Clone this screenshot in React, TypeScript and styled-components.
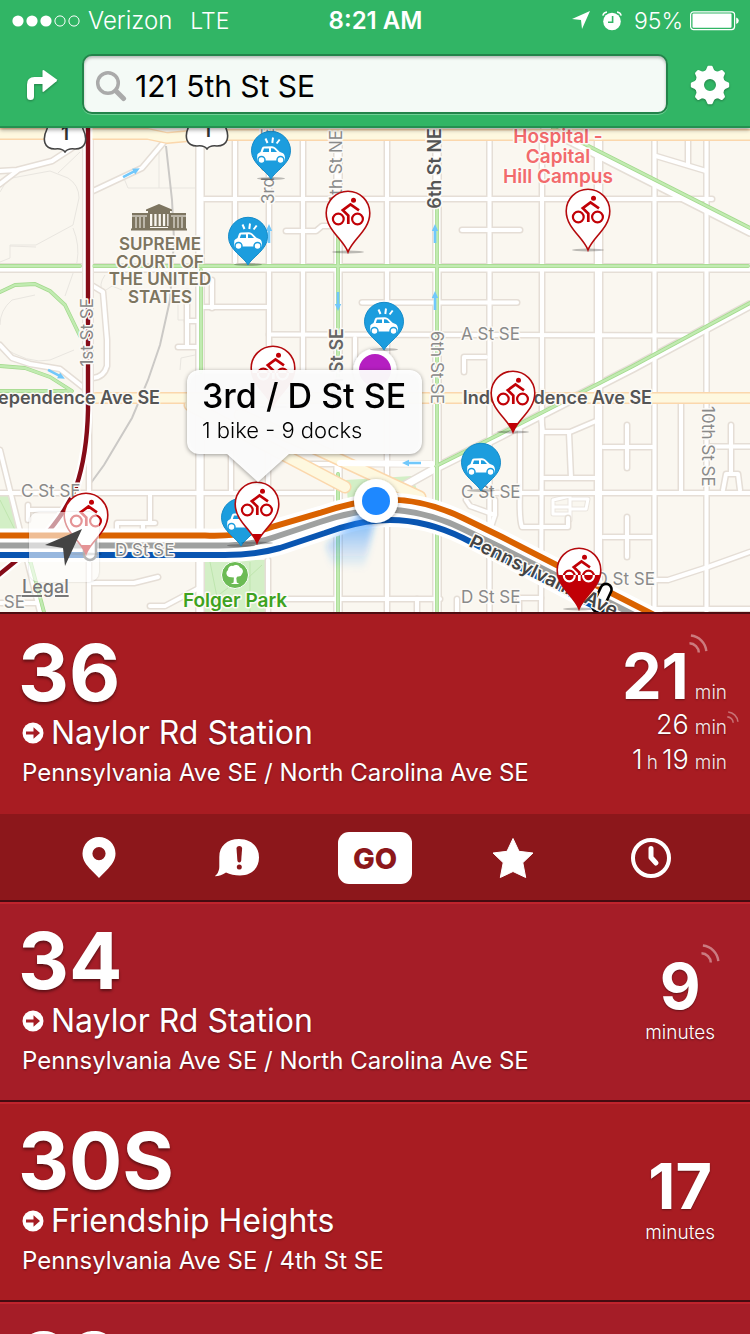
import React, { useId } from "react";
import styled, { createGlobalStyle } from "styled-components";

const GlobalStyle = createGlobalStyle`
  *, *::before, *::after { box-sizing: border-box; }
  body { margin: 0; background: #a81c22; }
  button { border: 0; padding: 0; margin: 0; background: none; color: inherit; font: inherit; cursor: pointer; }
  svg { display: block; }
`;

const FONT = `Inter, "Liberation Sans", sans-serif`;

const Page = styled.div`
  height: 100vh;
  display: flex;
  flex-direction: column;
  overflow: hidden;
  font-family: ${FONT};
  color: #fff;
`;

/* ---------- Header ---------- */

const Header = styled.header`
  flex: none;
  position: relative;
  z-index: 2;
  background: #31b565;
  border-bottom: 2px solid #259050;
  box-shadow: 0 2px 4px rgba(0, 0, 0, 0.35);
`;

const StatusBar = styled.div`
  height: 42px;
  padding: 0 11px 0 12px;
  display: grid;
  grid-template-columns: 1fr auto 1fr;
  align-items: center;
  font-size: 23px;
  font-weight: 300;
  line-height: 40px;
`;

const StatusGroup = styled.div<{ $end?: boolean }>`
  display: flex;
  align-items: center;
  gap: ${(p) => (p.$end ? 7 : 8)}px;
  justify-content: ${(p) => (p.$end ? "flex-end" : "flex-start")};
`;

const StatusIcons = styled.span`
  display: flex;
  gap: 12px;
  margin-right: 5px;
`;

const Carrier = styled.span`
  font-size: 24px;
`;

const Network = styled.span`
  margin-left: 10px;
`;

const Clock = styled.span`
  font-size: 24px;
  font-weight: 600;
`;

const SearchRow = styled.div`
  display: flex;
  align-items: center;
  padding: 12px 0;
`;

const HeaderButton = styled.button`
  width: 82px;
  height: 60px;
  padding: 2px 0 0 2px;
  display: flex;
  align-items: center;
  justify-content: center;
  svg { filter: drop-shadow(0 1px 1px rgba(0, 0, 0, 0.3)); }
`;

const SearchBox = styled.label`
  flex: 1;
  height: 60px;
  display: flex;
  align-items: center;
  gap: 8px;
  padding: 4px 12px 0 11px;
  border: 2px solid #23834a;
  border-radius: 10px;
  background: #f4faf6;
  box-shadow: inset 0 2px 3px rgba(0, 0, 0, 0.25), 0 1px 0 #6fcf95;
`;

const SearchInput = styled.input`
  flex: 1;
  min-width: 0;
  border: 0;
  padding: 0;
  outline: 0;
  background: none;
  color: #000;
  font: 400 30px/40px ${FONT};
`;

/* ---------- Map ---------- */

const MapArea = styled.section`
  flex: none;
  position: relative;
  width: 100%;
  aspect-ratio: 750 / 484;
  overflow: hidden;
  background: #faf7f0;
`;

const MapDrawing = styled.svg`
  width: 100%;
  height: 100%;
  font-family: ${FONT};
`;

const MapPin = styled.button<{ $x: number; $y: number }>`
  position: absolute;
  left: ${(p) => (p.$x / 750) * 100}%;
  top: ${(p) => (p.$y / 484) * 100}%;
  transform: translate(-50%, -100%);
  svg { overflow: visible; }
`;

const Callout = styled.div<{ $x: number; $y: number }>`
  position: absolute;
  left: ${(p) => (p.$x / 750) * 100}%;
  top: ${(p) => (p.$y / 484) * 100}%;
  width: 235px;
  height: 84px;
  padding: 8px 15px;
  border-radius: 12px;
  background: rgba(255, 255, 255, 0.95);
  color: #000;
  filter: drop-shadow(0 1px 2px rgba(0, 0, 0, 0.4));
  &::after {
    content: "";
    position: absolute;
    left: 40px;
    top: 100%;
    border: solid transparent;
    border-width: 28px 31px 0;
    border-top-color: rgba(255, 255, 255, 0.95);
  }
`;

const CalloutTitle = styled.h2`
  margin: 0;
  font-size: 34px;
  font-weight: 500;
  line-height: 36px;
  white-space: nowrap;
`;

const CalloutText = styled.p`
  margin: 0;
  font-size: 22px;
  font-weight: 300;
  line-height: 32px;
  white-space: nowrap;
`;

const MapTools = styled.div`
  position: absolute;
  left: 22px;
  bottom: 14px;
`;

const LocateButton = styled.button`
  display: block;
  width: 70px;
  height: 70px;
  margin-left: 7px;
  border-radius: 10px;
  background: rgba(255, 255, 255, 0.58);
  box-shadow: 0 0 2px rgba(0, 0, 0, 0.2);
`;

const LegalLink = styled.a`
  display: block;
  margin-top: -6px;
  color: #777;
  font-size: 18px;
  font-weight: 500;
  line-height: 22px;
  text-decoration: underline;
  text-decoration-thickness: 2px;
  text-underline-offset: 2px;
  text-shadow: 0 0 2px #fff, 0 0 2px #fff;
`;

/* ---------- Routes ---------- */

const Routes = styled.main`
  flex: 1;
  min-height: 0;
  overflow-y: auto;
  scrollbar-width: none;
  border-top: 2px solid #4e0d11;
`;

const RouteCard = styled.article<{ $alt?: boolean; $first?: boolean }>`
  background: ${(p) => (p.$alt ? "#a51d27" : "#a81c22")};
  border-top: ${(p) => (p.$first ? 0 : 2)}px solid #bf242d;
  border-bottom: 2px solid #440b10;
`;

const RouteBody = styled.div<{ $first?: boolean }>`
  height: ${(p) => (p.$first ? 200 : 196)}px;
  padding: ${(p) => (p.$first ? 28 : 26)}px 0 0 18px;
  display: flex;
  justify-content: space-between;
  text-shadow: 0 1px 2px rgba(0, 0, 0, 0.4);
`;

const RouteNumber = styled.h3`
  margin: 0 0 11px;
  font-size: 79px;
  font-weight: 700;
  line-height: 60px;
  text-shadow: 0 2px 3px rgba(0, 0, 0, 0.45);
`;

const Headsign = styled.div`
  display: flex;
  align-items: center;
  gap: 7px;
  padding-left: 4px;
  font-size: 32px;
  line-height: 40px;
`;

const Stop = styled.div`
  margin-top: 4px;
  padding-left: 4px;
  font-size: 24px;
  line-height: 32px;
`;

const Single = styled.div`
  margin-right: 35px;
  padding-top: 28px;
  text-align: center;
`;

const BigTime = styled.div`
  position: relative;
  width: max-content;
  margin: 0 auto;
  font-size: 63px;
  font-weight: 700;
  line-height: 56px;
`;

const Minutes = styled.div`
  margin-top: 5px;
  font-size: 19px;
  font-weight: 300;
  line-height: 28px;
`;

const TimeTable = styled.div`
  display: grid;
  grid-template-columns: auto auto;
  column-gap: 6px;
  align-content: start;
  align-items: baseline;
  justify-items: end;
  margin-right: 23px;
  padding-top: 6px;
  font-size: 27px;
  font-weight: 300;
  line-height: 32px;
`;

const HourTime = styled.span`
  display: flex;
  align-items: baseline;
  gap: 4px;
`;

const Unit = styled.span`
  position: relative;
  font-size: 19px;
  font-weight: 300;
  opacity: 0.9;
`;

const Signal = styled.span<{ $small?: boolean }>`
  position: absolute;
  left: 100%;
  top: ${(p) => (p.$small ? -1 : -14)}px;
`;

const Actions = styled.nav`
  height: 86px;
  padding: 2px 30px 0 30px;
  display: grid;
  grid-template-columns: repeat(5, 1fr);
  place-items: center;
  background: #8c171b;
`;

const ActionButton = styled.button`
  display: grid;
  place-items: center;
  width: 74px;
  height: 52px;
`;

const GoButton = styled(ActionButton)`
  border-radius: 11px;
  background: #fff;
  color: #8c171b;
  font-size: 29px;
  font-weight: 800;
`;

/* ---------- Icons ---------- */

const SignalDots = () => (
  <svg width="68" height="14" viewBox="0 0 68 14">
    {[6, 20, 34].map((x) => <circle key={x} cx={x} cy="7" r="5.6" fill="#fff" />)}
    {[48, 62].map((x) => <circle key={x} cx={x} cy="7" r="5.1" fill="none" stroke="#fff" />)}
  </svg>
);

const LocationArrow = () => (
  <svg width="18" height="18" viewBox="0 0 18 18"><path d="M18 0 10 18 9 9 0 8Z" fill="#fff" /></svg>
);

const AlarmIcon = () => (
  <svg width="20" height="20" viewBox="0 0 20 20">
    <circle cx="10" cy="10.5" r="8.8" fill="#fff" />
    <path d="M.8 4.6Q1.5 1.4 5 1M19.200 4.600Q18.500 1.400 15 1" fill="none" stroke="#fff" strokeWidth="1.400" />
    <path d="M10.600 5v6.200H6" fill="none" stroke="#31b565" strokeWidth="1.600" />
  </svg>
);

const BatteryIcon = () => (
  <svg width="49" height="20" viewBox="0 0 49 20">
    <rect x=".6" y=".8" width="44" height="17.800" rx="3" fill="none" stroke="#fff" strokeWidth="1.200" />
    <rect x="2.500" y="2.600" width="39" height="14.200" rx="1" fill="#fff" />
    <path d="M46.200 6.500q2.600.8 2.600 3.200t-2.600 3.200Z" fill="#fff" />
  </svg>
);

const TurnIcon = () => (
  <svg width="32" height="32" viewBox="0 0 32 32">
    <path d="M4.500 27.500V15.500Q4.500 11.500 8.500 11.500H18" fill="none" stroke="#fff" strokeWidth="7" strokeLinecap="round" />
    <path d="M16.500 2Q16.500.3 18 1.200L30.500 10.300Q31.500 11.200 30.500 12.200L18 22.500Q16.500 23.500 16.500 22Z" fill="#fff" />
  </svg>
);

const GearIcon = () => (
  <svg width="40" height="40" viewBox="-20 -20 40 40">
    <circle r="10.500" fill="none" stroke="#fff" strokeWidth="9" />
    {[0, 45, 90, 135, 180, 225, 270, 315].map((a) => (
      <path key={a} transform={`rotate(${a})`} d="M-6-13Q-3.500-15-2.800-18Q-2.400-19.200-1.500-19.200H1.500Q2.400-19.200 2.800-18Q3.500-15 6-13Z" fill="#fff" />
    ))}
  </svg>
);

const SearchIcon = () => (
  <svg width="32" height="32" viewBox="0 0 32 32" fill="none" stroke="#aaa" strokeLinecap="round">
    <circle cx="13" cy="13" r="10.300" strokeWidth="3.500" />
    <path d="m21 21 7.500 7.500" strokeWidth="5" />
  </svg>
);

const HeadsignArrow = () => (
  <svg width="22" height="22" viewBox="0 0 22 22">
    <circle cx="11" cy="11" r="10.500" fill="#fff" />
    <path d="M4 9.400h7.500V5.300l6.500 5.700-6.500 5.700v-4.100H4Z" fill="#a51d24" />
  </svg>
);

const WavesIcon = ({ size }: { size: number }) => (
  <svg width={size} height={size} viewBox="0 0 20 20" fill="none" stroke="#fff" strokeOpacity=".42" strokeWidth="2.600">
    <path d="M2 1.600A18 18 0 0 1 18.200 18M.5 9.800A10 10 0 0 1 10.300 19.500" />
  </svg>
);

const PlaceIcon = () => (
  <svg width="34" height="42" viewBox="0 0 34 42">
    <path fillRule="evenodd" d="M17 0A16.500 16.500 0 0 1 33.500 16.500C33.500 27 24 33 17 41C10 33 .5 27 .5 16.500A16.500 16.500 0 0 1 17 0ZM17 10a6.600 6.600 0 1 0 0 13.200A6.600 6.600 0 0 0 17 10Z" fill="#fff" />
  </svg>
);

const AlertIcon = () => (
  <svg width="46" height="40" viewBox="0 0 46 40">
    <path d="M25 1C37 1 45 8.500 45 19.500S37 37.500 26 37.500Q18 37.500 12 34.500Q7 38 .8 38.200Q5.500 34.500 5.300 28V19C5.300 8 13 1 25 1Z" fill="#fff" />
    <path d="M22.500 10.500Q22.600 8 25.300 8T28.100 10.500L27.200 22.500Q27 24.500 25.300 24.500T23.400 22.500Z" fill="#8c171b" />
    <circle cx="25.300" cy="29" r="2.500" fill="#8c171b" />
  </svg>
);

const StarIcon = () => (
  <svg width="42" height="42" viewBox="0 0 42 42">
    <path d="M21 1.500 27 14.300 41 16 30.800 25.700 33.700 40.500 21 34.500 8.300 40.500 11.200 25.700 1 16 15 14.300Z" fill="#fff" stroke="#fff" strokeLinejoin="round" />
  </svg>
);

const ClockIcon = () => (
  <svg width="40" height="40" viewBox="0 0 40 40" fill="none" stroke="#fff">
    <circle cx="20" cy="20" r="18" strokeWidth="4" />
    <path d="M20 10.500V19.500L25 25" strokeWidth="5" strokeLinecap="round" strokeLinejoin="round" />
  </svg>
);

const Cyclist = ({ color }: { color: string }) => (
  <g fill="none" stroke={color} strokeWidth="2.200">
    <circle cx="13.300" cy="29" r="5.400" />
    <circle cx="32.500" cy="29" r="5.400" />
    <path d="M34 20.300 25.500 14.500 17.800 20.200 23.300 25.500V34" strokeWidth="2.700" />
    <circle cx="28.500" cy="10.300" r="2.500" fill={color} stroke="none" />
  </g>
);

const PIN_PATH = "M23 62C18 49 1.200 40 1.200 23A21.800 21.800 0 0 1 44.800 23C44.800 40 28 49 23 62Z";

const BikePinIcon = ({ level }: { level: number }) => {
  const id = useId();
  return (
    <svg width="46" height="63" viewBox="0 0 46 63">
      <clipPath id={id}><rect y={level} width="46" height="63" /></clipPath>
      <ellipse cx="23" cy="62" rx="16" ry="1.500" fill="#000" opacity=".25" />
      <path d={PIN_PATH} fill="#fff" stroke="#b50a0d" strokeWidth="1.600" />
      <Cyclist color="#c10006" />
      <g clipPath={`url(#${id})`}>
        <path d={PIN_PATH} fill="#c10006" />
        <Cyclist color="#fff" />
      </g>
    </svg>
  );
};

const CarPinIcon = ({ live }: { live?: boolean }) => (
  <svg width="40" height="48" viewBox="0 0 40 48">
    <ellipse cx="20" cy="47.500" rx="14" ry="1.500" fill="#000" opacity=".25" />
    <path d="M20 48C16 40 .5 33 .5 19.800A19.500 19.500 0 0 1 39.500 19.800C39.500 33 24 40 20 48Z" fill="#1c9dde" stroke="#168bc8" />
    <path d="M6 29.500 6.300 23.500Q7 22 9.500 21L11 16.800Q11.600 15.600 13.500 15.500L21 15.300Q23 15.300 24.500 16.800L28.500 20.800 32 22.300Q34.300 23.700 34 29.500Z" fill="#fff" />
    <path d="M11.800 21 13 17.500H18V21ZM20 17.300Q22.500 17 23.500 18.200L26 21H20Z" fill="#1c9dde" />
    <g fill="#fff" stroke="#1c9dde" strokeWidth="1.500"><circle cx="10.500" cy="29" r="3.500" /><circle cx="29.500" cy="29" r="3.500" /></g>
    {live && <path d="M14.500 7.500 16.500 12M22 6.500 21.300 12M28.700 8.500 25.600 12.500" stroke="#fff" strokeWidth="2" />}
  </svg>
);

/* ---------- Map drawing ---------- */

const MINOR = [
  "M0 171 17 170 52 161 72 148", "M0 184 17 171", "M93 191 142 168 164 142",
  "M204 199H712", "M235 141V262", "M269 141V380", "M303 141V370", "M286 231H316L322 226H338",
  "M462 230H520", "M489.500 141V612", "M542 141V400L541 612", "M654.500 141V612", "M706.500 141V612",
  "M362 302.500H517", "M204 307H268", "M269 334.500 687 335.500", "M688 141V164", "M656 156 706 171",
  "M93 286 103 292 107 340V366Q104 377 93 378", "M212 280V308", "M187 292V345", "M187 321H198M178 347H198",
  "M355 338V372", "M464 357H486M464 357V372", "M0 493H250", "M387 400V612",
  "M387 141V400",
  "M150 494V522M117 536V523H155M143 523V534", "M89 400V612M92 583H134L158 577", "M28 510H82M28 505V520",
  "M0 450 40 612", "M199 588 165 606H150", "M231 453V492", "M268 560V612", "M268 453V492",
  "M303 464H430", "M269 493H337", "M250 599H440", "M485 493H750", "M520 430V490Q519 520 522 527H568V518",
  "M543 432H570L596 421M569 433 571 478M543 478H596", "M541 418 543 432", "M603 447H654", "M603 537H654",
  "M627 425V468M627 517V557", "M681 400V492", "M710 446.500H750M731 425V472", "M723 490 726 474H738L740 490",
  "M654 580H668L708 567 750 552", "M519 598H541M519 598V612", "M417 599V612M457 599V612", "M656 609H750",
  "M466 500 470 506 495 515 490 530M495 515V500", "M0 345 12 358 30 364 60 369 84 388", "M0 603H40",
];

const MAJOR = ["M200 141V612", "M338 141V612", "M437 141V612", "M598.500 141V612", "M0 268H750"];

const GREEN = [
  "M0 266H80", "M94 266H748", "M201 270V372", "M338 205V380", "M338 474V612", "M437 205V612",
  "M553 128 750 228", "M436 466 500 434 633 366 750 303",
  "M0 292 15 285 35 284 50 291 65 305 80 336", "M0 366 25 368 50 377 72 391H0", "M30 560 44 612",
];

const OUTLINES = [
  "M0 262 10 258V245H36L73 225 79 198Q79 185 68 178L50 171 12 178Q3 184 0 192",
  "M58 173 80 152M36 247 10 246", "M73 228Q80 245 77 262L65 296", "M128 188H195M159 145V188M123 176 128 188",
  "M12 300Q0 310 0 325M12 300 35 295M0 345Q28 365 50 360L74 350",
  "M105 275Q98 285 103 292L112 286 122 290", "M178 298V320H186M180 370 181 358 195 355",
];

const ONE_WAY_ARROWS: [number, number, number][] = [
  [131, 173, 62], [269, 234, 0], [338, 301, 180], [435, 234, 0], [435, 301, 0], [56, 374, 118], [412, 463, -90], [358, 521, 90],
];

const GRAY_ROADS = "M166 146 172 200 174 240 170 300 160 345 148 380 132 418 104 465 88 487";
const ORANGE_LINE = "M-5 535.500H205Q245 537 275 526L320 513Q352 502 378 500Q420 497 463 518L502 537 660 618";
const GRAY_LINE = "M-5 545.500H215Q250 546 275 537L320 522Q352 511 378 510Q420 508 463 529L502 548 640 618";
const BLUE_LINE = "M-5 555H225Q255 555 280 548L325 533Q355 522 378 520.500Q420 517 463 538L502 558 620 620";

const Label = styled.text<{ $color?: string; $weight?: number; $size?: number }>`
  fill: ${(p) => p.$color ?? "#8a8a8a"};
  font-size: ${(p) => p.$size ?? 17}px;
  font-weight: ${(p) => p.$weight ?? 400};
  stroke: #fcfaf6;
  stroke-width: 3px;
  stroke-linejoin: round;
  paint-order: stroke;
`;

const Shield = ({ x, y }: { x: number; y: number }) => (
  <g transform={`translate(${x} ${y})`}>
    <path d="M-16-24H16L18-14Q22-6 20 0Q18 6 10 6Q3 5 0 9Q-3 5-10 6Q-18 6-20 0Q-22-6-18-14Z" fill="#fff" stroke="#444" strokeWidth="1.600" />
    <text y="-3" textAnchor="middle" fontSize="19" fontWeight="600" fill="#333">1</text>
  </g>
);

const CourtIcon = () => (
  <g fill="#7d7560">
    <path d="M146 209.500 159 204 172 209.500V211H146ZM148 211H170V214H148Z" />
    <path d="M132 213H148V230H132ZM170 213H186V230H170ZM131 228.500H187V230.500H131ZM148 226H170V229H148Z" />
    <path d="M149 213V227M153.300 213V227M157.600 213V227M161.900 213V227M166.200 213V227M169.500 213V227" stroke="#7d7560" strokeWidth="2" />
    <path d="M132 216H147M171 216H186M136 217V228M140 217V228M144 217V228M174 217V228M178 217V228M182 217V228M150 227.500H168" stroke="#faf7f0" />
  </g>
);

const CityMap = () => (
  <MapDrawing viewBox="0 128 750 484" preserveAspectRatio="none" aria-label="Map of Capitol Hill">
    <defs>
      <linearGradient id="heading" x1="0" y1="0" x2="0" y2="1">
        <stop offset="0" stopColor="#1e88ff" stopOpacity=".65" />
        <stop offset="1" stopColor="#1e88ff" stopOpacity="0" />
      </linearGradient>
      <filter id="soft" x="-20%" y="-20%" width="140%" height="140%"><feGaussianBlur stdDeviation="3" /></filter>
      <filter id="lift" x="-30%" y="-30%" width="160%" height="160%"><feDropShadow dx="0" dy="1" stdDeviation="2" floodOpacity=".4" /></filter>
    </defs>
    <rect y="128" width="750" height="484" fill="#faf7f0" />
    <path d="M202 560H265V612H202ZM0 495H8L18 532H0ZM346 480 412 476 420 498 348 502Z" fill="#d3efc6" />
    <path d="M210 562 220 612M235 590 262 565M250 562V612M228 588 205 605M0 500 15 530" stroke="#bfe5ae" fill="none" />
    <g fill="none" stroke="#e9e6e0">{OUTLINES.map((d) => <path key={d} d={d} />)}</g>
    <path d={GRAY_ROADS} fill="none" stroke="#cbc9c6" strokeWidth="2" />

    <g fill="none" strokeLinecap="round" strokeLinejoin="round">
      <g stroke="#eae5de">
        <path d="M553 500 570 496V514H553ZM553 507H568M570 499H588L586 509H570M570 514V520" strokeWidth="5" />
        <path d="M553 500 570 496V514H553ZM553 507H568M570 499H588L586 509H570M570 514V520" stroke="#fff" strokeWidth="3" />
      </g>
      <g stroke="#e5ded6" strokeWidth="7">{MINOR.map((d) => <path key={d} d={d} />)}</g>
      <g stroke="#e5ded6" strokeWidth="10">{MAJOR.map((d) => <path key={d} d={d} />)}</g>
      <path d="M545 128 750 232M400 488 436 468 500 436 633 368 750 305" stroke="#e5ded6" strokeWidth="10" />
      <g stroke="#fff" strokeWidth="4">{MINOR.map((d) => <path key={d} d={d} />)}</g>
      <g stroke="#fff" strokeWidth="7">{MAJOR.map((d) => <path key={d} d={d} />)}</g>
      <path d="M545 128 750 232M400 488 436 468 500 436 633 368 750 305" stroke="#fff" strokeWidth="7" />
      <path d="M88 128V400" stroke="#e9e2dc" strokeWidth="12" />
      <path d="M88 128V400" stroke="#fff" strokeWidth="9" />
      <g stroke="#a3d98c" strokeWidth="3.800">{GREEN.map((d) => <path key={d} d={d} />)}</g>
      <g stroke="#c1ebb1" strokeWidth="2.400">{GREEN.map((d) => <path key={d} d={d} />)}</g>
      <g stroke="#fbd7ac" strokeWidth="12">
        <path d="M0 134H84M93 134H148L167 138 200 135H750" />
        <path d="M96 398H750" />
        <path d="M190 405 250 437 345 487M240 415 310 446 420 497" strokeWidth="13" />
      </g>
      <g stroke="#fef8df" strokeWidth="9">
        <path d="M0 134H84M93 134H148L167 138 200 135H750" />
        <path d="M96 398H750" />
        <path d="M190 405 250 437 345 487M240 415 310 446 420 497" strokeWidth="10" />
      </g>
      <path d="M340 463 432 464" stroke="#fff" strokeWidth="6" />
    </g>

    <g fill="#71c8fb">
      {ONE_WAY_ARROWS.map(([x, y, a]) => (
        <path key={`${x}-${y}`} transform={`translate(${x} ${y}) rotate(${a})`} d="M0-10 3.200-3H1.300V9H-1.300V-3H-3.200Z" />
      ))}
    </g>

    <g fill="none">
      <path d="M88 128V410Q87 455 76 487Q65 515 38 543L-5 578" stroke="#fff" strokeWidth="9" />
      <path d="M88 128V410Q87 455 76 487Q65 515 38 543L-5 578" stroke="#850c18" strokeWidth="4.400" />
      {[ORANGE_LINE, GRAY_LINE, BLUE_LINE].map((d) => <path key={d} d={d} stroke="#fff" strokeWidth="14" />)}
      <path d={ORANGE_LINE} stroke="#da6200" strokeWidth="6" />
      <path d={GRAY_LINE} stroke="#9fa1a0" strokeWidth="6" />
      <path d={BLUE_LINE} stroke="#0955b1" strokeWidth="6" />
    </g>
    <rect x="84" y="531" width="12" height="29" rx="6" fill="#fff" stroke="#555" strokeWidth="2.500" />

    <Shield x={65} y={143} />
    <Shield x={207} y={140} />
    <CourtIcon />
    <g textAnchor="middle">
      <Label x="160" y="250" $color="#7d7560" $weight={600}>SUPREME</Label>
      <Label x="160" y="268" $color="#7d7560" $weight={600}>COURT OF</Label>
      <Label x="160" y="285" $color="#7d7560" $weight={600}>THE UNITED</Label>
      <Label x="160" y="303" $color="#7d7560" $weight={600}>STATES</Label>
      <Label x="558" y="143" $color="#f26a6c" $weight={600} $size={19}>Hospital -</Label>
      <Label x="558" y="163" $color="#f26a6c" $weight={600} $size={19}>Capital</Label>
      <Label x="558" y="183" $color="#f26a6c" $weight={600} $size={19}>Hill Campus</Label>
      <Label x="235" y="607" $color="#3ea220" $weight={600} $size={19}>Folger Park</Label>
    </g>
    <Label x="461" y="340">A St SE</Label>
    <Label x="461" y="498">C St SE</Label>
    <Label x="461" y="603">D St SE</Label>
    <Label x="655" y="585" textAnchor="end">D St SE</Label>
    <Label x="21" y="497">C St SE</Label>
    <Label x="115" y="556">D St SE</Label>
    <Label x="25" y="608" textAnchor="end">t SE</Label>
    <Label x="160" y="404" textAnchor="end" $color="#555" $weight={600} $size={18}>ependence Ave SE</Label>
    <Label x="652" y="404" textAnchor="end" $color="#555" $weight={600} $size={18}>Independence Ave SE</Label>
    <Label textAnchor="end" transform="translate(93 298) rotate(-90)">1st St SE</Label>
    <Label transform="translate(274 204) rotate(-90)">3rd St NE</Label>
    <Label textAnchor="end" transform="translate(342 130) rotate(-90)">4th St NE</Label>
    <Label textAnchor="end" transform="translate(441 128) rotate(-90)" $color="#555" $weight={600} $size={18}>6th St NE</Label>
    <Label textAnchor="end" transform="translate(343 328) rotate(-90)" $color="#666" $weight={600} $size={18}>4th St SE</Label>
    <Label transform="translate(431 331) rotate(90)">6th St SE</Label>
    <Label transform="translate(702 406) rotate(90)">10th St SE</Label>
    <rect x="-5.500" y="-15" width="11" height="30" rx="5.500" transform="translate(602 598) rotate(25)" fill="#fff" stroke="#000" strokeWidth="2.600" />
    <Label transform="translate(468 546) rotate(26)" $color="#444" $weight={600} $size={19}>Pennsylvania Ave</Label>

    <circle cx="235" cy="575" r="13.500" fill="#6cbb55" stroke="#fff" />
    <path d="M229 577a4 4 0 0 1-1-7 4 4 0 0 1 5-4 4.500 4.500 0 0 1 7 1.500 4 4 0 0 1 2 6.500q-1 3-4.500 2.500L236.300 578l.5 4.500 2.500 1.500h-8.500l2.800-1.500.3-5Z" fill="#fff" />

    <path d="M366 508 326 545 332 566 364 570 376 515Z" fill="url(#heading)" filter="url(#soft)" />
    <circle cx="375" cy="370" r="21.500" fill="#fff" filter="url(#lift)" />
    <circle cx="375" cy="370" r="16" fill="#b51fc1" />
    <circle cx="376" cy="501" r="22" fill="#fff" filter="url(#lift)" />
    <circle cx="376" cy="501" r="14" fill="#1e88ff" />
  </MapDrawing>
);

/* Pin tips in map units, drawn from back to front. */
const CAR_PINS = [
  { x: 271, y: 51, live: true },
  { x: 248, y: 137, live: true },
  { x: 384, y: 222, live: true },
  { x: 481, y: 363, live: false },
  { x: 241, y: 418, live: false },
];

const BIKE_PINS = [
  { x: 348, y: 125, level: 63 },
  { x: 588, y: 123, level: 63 },
  { x: 273, y: 280, level: 28 },
  { x: 513, y: 305, level: 53 },
  { x: 86, y: 427, level: 53 },
  { x: 257, y: 416, level: 53 },
  { x: 579, y: 482, level: 28 },
];

interface RouteInfoProps {
  number: string;
  headsign?: string;
  stop?: string;
}

const RouteInfo = ({ number, headsign, stop }: RouteInfoProps) => (
  <div>
    <RouteNumber>{number}</RouteNumber>
    {headsign && <Headsign><HeadsignArrow />{headsign}</Headsign>}
    {stop && <Stop>{stop}</Stop>}
  </div>
);

export default function App() {
  return (
    <Page>
      <GlobalStyle />
      <Header>
        <StatusBar>
          <StatusGroup>
            <SignalDots />
            <Carrier>Verizon</Carrier>
            <Network>LTE</Network>
          </StatusGroup>
          <Clock>8:21 AM</Clock>
          <StatusGroup $end>
            <StatusIcons>
              <LocationArrow />
              <AlarmIcon />
            </StatusIcons>
            <span>95%</span>
            <BatteryIcon />
          </StatusGroup>
        </StatusBar>
        <SearchRow>
          <HeaderButton aria-label="Directions"><TurnIcon /></HeaderButton>
          <SearchBox>
            <SearchIcon />
            <SearchInput type="text" defaultValue="121 5th St SE" aria-label="Search address" />
          </SearchBox>
          <HeaderButton aria-label="Settings"><GearIcon /></HeaderButton>
        </SearchRow>
      </Header>

      <MapArea>
        <CityMap />
        {CAR_PINS.map((p) => (
          <MapPin key={`${p.x}-${p.y}`} $x={p.x} $y={p.y} aria-label="Shared car"><CarPinIcon live={p.live} /></MapPin>
        ))}
        {BIKE_PINS.map((p) => (
          <MapPin key={`${p.x}-${p.y}`} $x={p.x} $y={p.y} aria-label="Bike station"><BikePinIcon level={p.level} /></MapPin>
        ))}
        <Callout $x={187} $y={242}>
          <CalloutTitle>3rd / D St SE</CalloutTitle>
          <CalloutText>1 bike - 9 docks</CalloutText>
        </Callout>
        <MapTools>
          <LocateButton aria-label="Show my location">
            <svg width="70" height="70" viewBox="0 0 70 70"><path d="M53 17 16 33 34 36 36 54Z" fill="#444" /></svg>
          </LocateButton>
          <LegalLink href="#legal">Legal</LegalLink>
        </MapTools>
      </MapArea>

      <Routes>
        <RouteCard $first>
          <RouteBody $first>
            <RouteInfo number="36" headsign="Naylor Rd Station" stop="Pennsylvania Ave SE / North Carolina Ave SE" />
            <TimeTable>
              <BigTime>21<Signal><WavesIcon size={19} /></Signal></BigTime>
              <Unit>min</Unit>
              <span>26</span>
              <Unit>min<Signal $small><WavesIcon size={12} /></Signal></Unit>
              <HourTime><span>1</span><Unit>h</Unit><span>19</span></HourTime>
              <Unit>min</Unit>
            </TimeTable>
          </RouteBody>
          <Actions>
            <ActionButton aria-label="Stops"><PlaceIcon /></ActionButton>
            <ActionButton aria-label="Alerts"><AlertIcon /></ActionButton>
            <GoButton>GO</GoButton>
            <ActionButton aria-label="Favorite"><StarIcon /></ActionButton>
            <ActionButton aria-label="Schedule"><ClockIcon /></ActionButton>
          </Actions>
        </RouteCard>

        <RouteCard $alt>
          <RouteBody>
            <RouteInfo number="34" headsign="Naylor Rd Station" stop="Pennsylvania Ave SE / North Carolina Ave SE" />
            <Single>
              <BigTime>9<Signal><WavesIcon size={19} /></Signal></BigTime>
              <Minutes>minutes</Minutes>
            </Single>
          </RouteBody>
        </RouteCard>

        <RouteCard>
          <RouteBody>
            <RouteInfo number="30S" headsign="Friendship Heights" stop="Pennsylvania Ave SE / 4th St SE" />
            <Single>
              <BigTime>17</BigTime>
              <Minutes>minutes</Minutes>
            </Single>
          </RouteBody>
        </RouteCard>

        <RouteCard $alt>
          <RouteBody>
            <RouteInfo number="39" />
          </RouteBody>
        </RouteCard>
      </Routes>
    </Page>
  );
}
